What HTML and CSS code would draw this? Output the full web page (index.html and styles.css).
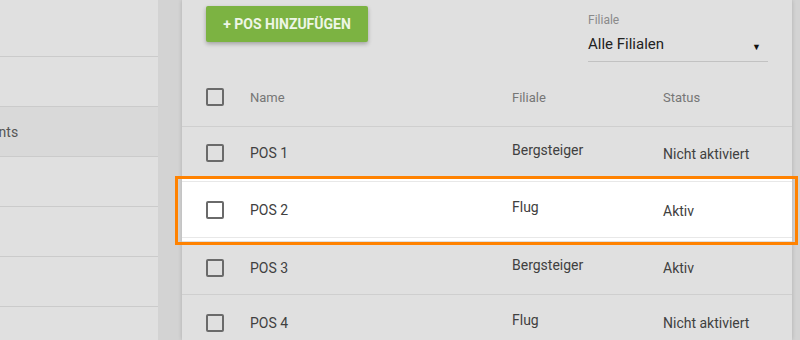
FILE: index.html
```html
<!DOCTYPE html>
<html lang="de">
<head>
<meta charset="utf-8">
<title>POS</title>
<link rel="stylesheet" href="styles.css">
</head>
<body>
<div class="page">
  <aside class="sidebar">
    <div class="side-item first"></div>
    <div class="side-item"></div>
    <div class="side-item active"><span class="side-label">Payments</span></div>
    <div class="side-item"></div>
    <div class="side-item"></div>
    <div class="side-item"></div>
    <div class="side-item"></div>
  </aside>
  <main class="card">
    <div class="toolbar">
      <button class="add-btn">+ POS hinzufügen</button>
      <div class="select">
        <div class="select-label">Filiale</div>
        <div class="select-field"><span>Alle Filialen</span><span class="arrow">&#9660;</span></div>
      </div>
    </div>
    <div class="table">
      <div class="row head">
        <div class="c-check"><span class="checkbox"></span></div>
        <div class="c-name">Name</div>
        <div class="c-fil">Filiale</div>
        <div class="c-status">Status</div>
      </div>
      <div class="row r1">
        <div class="c-check"><span class="checkbox"></span></div>
        <div class="c-name">POS 1</div>
        <div class="c-fil up">Bergsteiger</div>
        <div class="c-status">Nicht aktiviert</div>
      </div>
      <div class="row r2 selected">
        <div class="c-check"><span class="checkbox"></span></div>
        <div class="c-name">POS 2</div>
        <div class="c-fil up">Flug</div>
        <div class="c-status">Aktiv</div>
      </div>
      <div class="row r3">
        <div class="c-check"><span class="checkbox"></span></div>
        <div class="c-name">POS 3</div>
        <div class="c-fil up">Bergsteiger</div>
        <div class="c-status">Aktiv</div>
      </div>
      <div class="row r4">
        <div class="c-check"><span class="checkbox"></span></div>
        <div class="c-name">POS 4</div>
        <div class="c-fil up">Flug</div>
        <div class="c-status">Nicht aktiviert</div>
      </div>
    </div>
  </main>
</div>
<div class="highlight"></div>
</body>
</html>
```
FILE: styles.css
```css
html, body {
  margin: 0;
  padding: 0;
  height: 340px;
  overflow: hidden;
}
body {
  background: #d3d3d3;
  font-family: Roboto, "Liberation Sans", Arial, sans-serif;
  color: #424242;
}
.page {
  display: flex;
  gap: 24px;
  height: 340px;
}
.sidebar {
  width: 158px;
  flex: none;
  background: #e0e0e0;
  overflow: hidden;
}
.side-item {
  height: 49px;
  border-bottom: 1px solid #cbcbcb;
  display: flex;
  align-items: center;
  font-size: 14px;
  color: #555;
}
.side-item.first {
  height: 56px;
}
.side-item.active {
  background: #d9d9d9;
}
.side-label {
  margin-left: -44px;
  white-space: nowrap;
}
.card {
  width: 610px;
  flex: none;
  background: #e0e0e0;
  box-shadow: 0 0 4px rgba(0,0,0,0.18);
}
.toolbar {
  display: flex;
  justify-content: space-between;
  align-items: flex-start;
  padding: 6px 24px 0 24px;
  height: 64px;
}
.add-btn {
  height: 36px;
  width: 162px;
  padding: 0;
  border: none;
  border-radius: 2px;
  background: #7cb342;
  color: #eef6e6;
  font-family: Roboto, "Liberation Sans", Arial, sans-serif;
  font-weight: 700;
  font-size: 14px;
  text-transform: uppercase;
  box-shadow: 0 2px 4px rgba(0,0,0,0.28);
}
.select {
  width: 180px;
  padding-top: 7px;
}
.select-label {
  font-size: 12px;
  color: #8a8a8a;
  line-height: 14px;
}
.select-field {
  display: flex;
  justify-content: space-between;
  align-items: center;
  font-size: 15px;
  color: #222;
  height: 35px;
  border-bottom: 1px solid #c2c2c2;
  box-sizing: border-box;
}
.arrow {
  font-size: 9px;
  color: #111;
  margin-right: 7px;
  padding-top: 5px;
}
.row {
  display: flex;
  align-items: center;
  border-bottom: 1px solid #cfcfcf;
  font-size: 14px;
  color: #404040;
}
.row.head {
  height: 56px;
  font-size: 13px;
  color: #767676;
}
.row.head > div { padding-bottom: 2px; }
.row.r1 { height: 52px; border-bottom: none; }
.row.r2 { height: 62px; border-bottom: none; }
.row.r3 { height: 53px; }
.row.r4 { height: 55px; }
.row.selected {
  background: #fff;
  box-shadow: inset 0 2px 0 #fff, inset 0 3px 0 #e8e8e8, inset 0 -3px 0 #fff, inset 0 -4px 0 #e8e8e8;
}
.c-check {
  width: 68px;
  padding-left: 24px;
  box-sizing: border-box;
  display: flex;
  align-items: center;
}
.checkbox {
  width: 14px;
  height: 14px;
  border: 2px solid #6a6a6a;
  border-radius: 2px;
}
.c-name { width: 262px; }
.c-fil { width: 151px; }
.c-fil.up { padding-bottom: 6px; }
.c-status { flex: 1; }
.row .c-status { padding-top: 1px; }
.highlight {
  position: absolute;
  left: 175px;
  top: 176px;
  width: 617px;
  height: 63px;
  border: 3px solid #ff8200;
}
```
